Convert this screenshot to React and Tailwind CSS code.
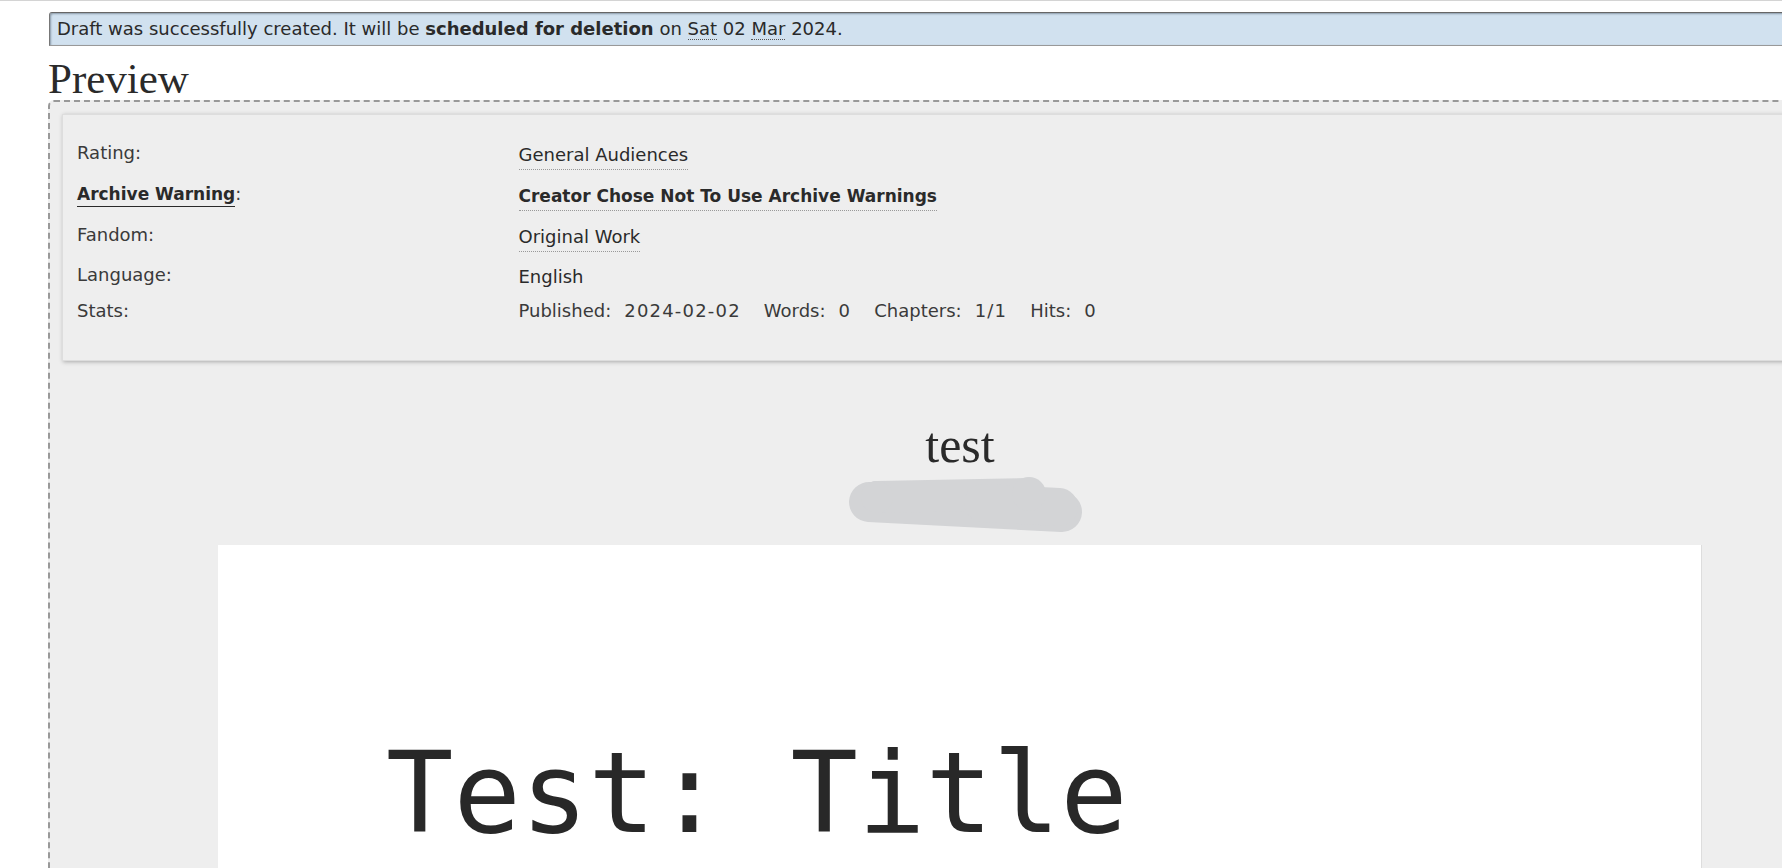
const sans = { fontFamily: '"DejaVu Sans", Verdana, sans-serif' }

const Notice = () => (
  <div
    className="ml-[1px] h-[34px] rounded-tl-[3px] border border-[#999] border-t-[#666] border-l-[#777] bg-[#d1e1ef] pl-[7px] text-[18px] leading-[32px] text-[#2a2a2a] shadow-[inset_1px_1px_2px_#8a9aa8]"
    style={sans}
  >
    Draft was successfully created. It will be <strong className="font-bold">scheduled for deletion</strong> on{' '}
    <abbr className="no-underline border-b border-dotted border-[#555]">Sat</abbr> 02{' '}
    <abbr className="no-underline border-b border-dotted border-[#555]">Mar</abbr> 2024.
  </div>
)

const Tag = ({ children, bold }) => (
  <span
    className={`mt-[2px] inline-block border-b border-dotted border-[#999] pb-[2px] leading-[24px] text-[#2a2a2a] ${
      bold ? 'font-bold text-[17px]' : ''
    }`}
  >
    {children}
  </span>
)

const MetaRow = ({ label, h, children }) => (
  <div className={`flex ${h}`}>
    <dt className="w-1/4 shrink-0 leading-[24px] text-[#3a3a3a]">{label}</dt>
    <dd className="flex-1">{children}</dd>
  </div>
)

const stats = [
  ['Published:', '2024-02-02'],
  ['Words:', '0'],
  ['Chapters:', '1/1'],
  ['Hits:', '0'],
]

const Meta = () => (
  <dl
    className="h-[247px] border border-[#ddd] bg-[#eee] pl-[14px] pr-[14px] pt-[26px] text-[18px] shadow-[1px_1px_4px_#aaa]"
    style={sans}
  >
    <MetaRow label="Rating:" h="h-[41px]">
      <Tag>General Audiences</Tag>
    </MetaRow>
    <MetaRow
      h="h-[41px]"
      label={
        <>
          <span className="inline-block border-b border-[#2a2a2a] text-[17px] font-bold leading-[24px] text-[#2a2a2a]">
            Archive Warning
          </span>
          :
        </>
      }
    >
      <Tag bold>Creator Chose Not To Use Archive Warnings</Tag>
    </MetaRow>
    <MetaRow label="Fandom:" h="h-[40px]">
      <Tag>Original Work</Tag>
    </MetaRow>
    <MetaRow label="Language:" h="h-[36px]">
      <span className="inline-block leading-[24px] text-[#2a2a2a]">English</span>
    </MetaRow>
    <MetaRow label="Stats:" h="h-[24px]">
      <div className="flex gap-[23px] leading-[24px] text-[#3a3a3a]">
        {stats.map(([k, v]) => (
          <div key={k} className="flex gap-[13px]">
            <span>{k}</span>
            <span className="tracking-[1.2px]">{v}</span>
          </div>
        ))}
      </div>
    </MetaRow>
  </dl>
)

// redaction smudge over the author name
const Scribble = () => (
  <svg width="254" height="64" viewBox="0 0 254 64" className="mx-auto mt-[2px] block">
    <g stroke="#d3d4d6" strokeLinecap="round" fill="none">
      <line x1="36" y1="30" x2="229" y2="40" strokeWidth="40" />
      <line x1="44" y1="25" x2="195" y2="22" strokeWidth="32" />
      <line x1="150" y1="31" x2="226" y2="35" strokeWidth="38" />
    </g>
    <circle cx="44" cy="25" r="16" fill="#d3d4d6" />
    <circle cx="196" cy="22" r="17" fill="#d3d4d6" />
  </svg>
)

export default function App() {
  return (
    <div className="h-[868px] w-full overflow-hidden border-t border-[#d4d4d4] bg-white">
      <div className="w-[1920px] px-[48px] pt-[11px]">
        <Notice />
        <h2
          className="mt-[12px] text-[43px] leading-[42px] text-[#2a2a2a]"
          style={{ fontFamily: '"Liberation Serif", Georgia, serif' }}
        >
          Preview
        </h2>
        <div className="rounded-tl-[6px] border-2 border-dashed border-[#999] bg-[#eee] p-[12px]">
          <Meta />
          <h2
            className="mt-[59px] text-center text-[50px] leading-[50px] text-[#2a2a2a]"
            style={{ fontFamily: '"Liberation Serif", Georgia, serif' }}
          >
            test
          </h2>
          <Scribble />
          <div className="mx-auto mt-[9px] h-[420px] w-[1484px] border-r border-[#ddd] bg-white pl-[168px] pt-[192px]">
            <div
              className="text-[112px] leading-[112px] text-[#282828]"
              style={{ fontFamily: '"DejaVu Sans Mono", monospace' }}
            >
              Test: Title
            </div>
          </div>
        </div>
      </div>
    </div>
  )
}
